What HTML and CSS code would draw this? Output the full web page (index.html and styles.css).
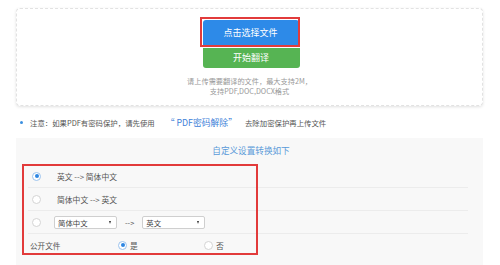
FILE: index.html
```html
<!DOCTYPE html>
<html lang="zh-CN">
<head>
<meta charset="utf-8">
<link rel="stylesheet" href="styles.css">
</head>
<body>
<div class="page">
  <div class="upload-box">
    <div class="btn-wrap">
      <div class="btn btn-blue">点击选择文件</div>
      <div class="mark mark-btn"></div>
    </div>
    <div class="btn btn-green">开始翻译</div>
    <p class="hint">请上传需要翻译的文件，最大支持2M，<br>支持PDF,DOC,DOCX格式</p>
  </div>

  <div class="notice">
    <span class="dot"></span>
    <span class="n-text">注意：如果PDF有密码保护，请先使用</span>
    <span class="n-link">“ PDF密码解除”</span>
    <span class="n-text n-after">去除加密保护再上传文件</span>
  </div>

  <div class="settings">
    <div class="s-title">自定义设置转换如下</div>
    <div class="rows">
      <div class="row">
        <span class="radio on"></span><span class="r-label">英文 --&gt; 简体中文</span>
      </div>
      <div class="row">
        <span class="radio"></span><span class="r-label">简体中文 --&gt; 英文</span>
      </div>
      <div class="row">
        <span class="radio"></span>
        <span class="sel sel-first">简体中文<i class="arr"></i></span>
        <span class="arrow-txt">--&gt;</span>
        <span class="sel">英文<i class="arr"></i></span>
      </div>
      <div class="row row-last">
        <span class="pub-label">公开文件</span>
        <span class="opt"><span class="radio on"></span><span class="o-label">是</span></span>
        <span class="opt"><span class="radio"></span><span class="o-label">否</span></span>
      </div>
      <div class="mark mark-rows"></div>
    </div>
  </div>
</div>
</body>
</html>
```
FILE: styles.css
```css
* { box-sizing: border-box; }
html, body { margin: 0; padding: 0; background: #fff; }
body {
  font-family: "Noto Sans CJK SC", "Noto Sans", sans-serif;
  color: #555;
  width: 500px;
  height: 265px;
  overflow: hidden;
}
.page {
  padding: 8px 17px 0 16px;
}
.upload-box {
  height: 98px;
  border: 1px dashed #e2e2e2;
  border-radius: 4px;
  box-shadow: 0 1px 3px rgba(0,0,0,0.12);
  display: flex;
  flex-direction: column;
  align-items: center;
  padding-top: 11px;
}
.btn-wrap { position: relative; }
.btn {
  width: 96px;
  color: #fff;
  font-size: 9px;
  text-align: center;
  margin-left: 2px;
}
.btn-blue {
  height: 26px;
  line-height: 26px;
  background: #2d8ae8;
  border-radius: 3px 3px 0 0;
}
.btn-green {
  height: 20px;
  line-height: 20px;
  background: #56b453;
  border-radius: 0 0 3px 3px;
  margin-top: 2px;
  width: 97px;
  margin-left: 3px;
}
.mark {
  position: absolute;
  border: 2px solid #e23b3b;
  pointer-events: none;
}
.mark-btn {
  left: -1px;
  top: -3px;
  width: 100px;
  height: 30px;
}
.hint {
  margin: 8px 0 0;
  font-size: 7.2px;
  line-height: 10px;
  color: #999;
  text-align: center;
}
.notice {
  height: 32px;
  display: flex;
  align-items: center;
  padding-left: 4px;
  white-space: nowrap;
}
.dot {
  width: 3px;
  height: 3px;
  border-radius: 50%;
  background: #3b8fe0;
  margin-right: 7px;
}
.n-text { font-size: 7.4px; color: #555; }
.n-link { font-size: 8.8px; color: #3d80d8; margin-left: 11px; }
.n-after { margin-left: 8px; }
.settings {
  background: #f8f8f8;
  height: 140px;
  padding-top: 4px;
}
.s-title {
  text-align: center;
  font-size: 8.6px;
  line-height: 16px;
  color: #5a9ad9;
  padding-left: 3px;
}
.rows {
  position: relative;
  margin: 7px 0 0 12px;
  width: 440px;
}
.row {
  height: 23px;
  border-bottom: 1px solid #ececec;
  display: flex;
  align-items: center;
  padding-left: 4px;
  font-size: 7.8px;
  color: #555;
}
.row-last { border-bottom: none; padding-left: 2px; height: 22px; }
.radio {
  width: 9px;
  height: 9px;
  border-radius: 50%;
  border: 1px solid #d4d4d4;
  background: #fff;
  flex: none;
  position: relative;
}
.radio.on { border-color: #9cc3ee; }
.radio.on::after {
  content: "";
  position: absolute;
  left: 1.5px;
  top: 1.5px;
  width: 4px;
  height: 4px;
  border-radius: 50%;
  background: #2d86e2;
}
.r-label { margin-left: 16px; }
.sel {
  position: relative;
  width: 63px;
  height: 13px;
  line-height: 11px;
  background: #fff;
  border: 1px solid #cfcfcf;
  border-radius: 2px;
  padding-left: 3px;
  font-size: 7.4px;
  color: #444;
}
.sel-first { margin-left: 13px; }
.arr {
  position: absolute;
  right: 5px;
  top: 4px;
  width: 0;
  height: 0;
  border-left: 1.5px solid transparent;
  border-right: 1.5px solid transparent;
  border-top: 3px solid #333;
}
.arrow-txt { margin: 0 8px 0 8px; font-size: 7.4px; }
.pub-label { width: 88px; font-size: 7.6px; }
.opt { display: flex; align-items: center; width: 86px; }
.o-label { margin-left: 3px; font-size: 7.8px; }
.mark-rows {
  left: -6px;
  top: -1px;
  width: 236px;
  height: 91px;
}
```
